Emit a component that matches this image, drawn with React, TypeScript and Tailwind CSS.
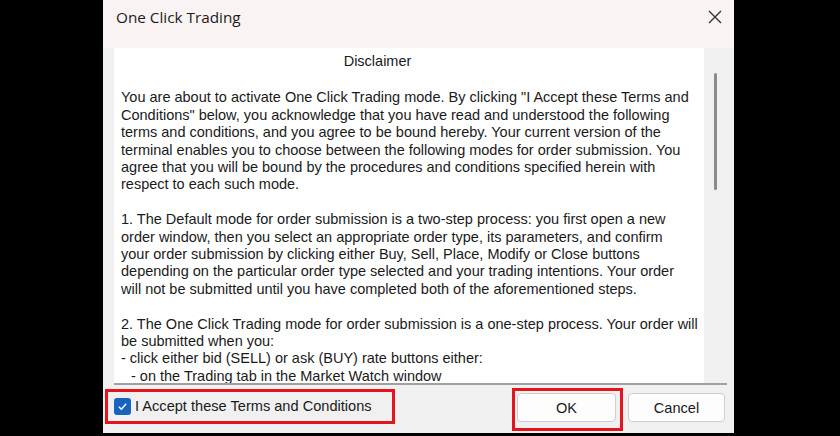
import React from "react";

const lines1 = [
  "You are about to activate One Click Trading mode. By clicking \"I Accept these Terms and",
  "Conditions\" below, you acknowledge that you have read and understood the following",
  "terms and conditions, and you agree to be bound hereby. Your current version of the",
  "terminal enables you to choose between the following modes for order submission. You",
  "agree that you will be bound by the procedures and conditions specified herein with",
  "respect to each such mode.",
];
const lines2 = [
  "1. The Default mode for order submission is a two-step process: you first open a new",
  "order window, then you select an appropriate order type, its parameters, and confirm",
  "your order submission by clicking either Buy, Sell, Place, Modify or Close buttons",
  "depending on the particular order type selected and your trading intentions. Your order",
  "will not be submitted until you have completed both of the aforementioned steps.",
];
const lines3 = [
  "2. The One Click Trading mode for order submission is a one-step process. Your order will",
  "be submitted when you:",
  "- click either bid (SELL) or ask (BUY) rate buttons either:",
];

function Para({ lines }: { lines: string[] }) {
  return (
    <div>
      {lines.map((l, i) => (
        <div key={i} className="whitespace-nowrap">
          {l}
        </div>
      ))}
    </div>
  );
}

export default function App() {
  return (
    <div className="flex h-[436px] w-[840px] bg-black pl-[103px]">
      <div className="flex h-[433px] w-[631px] flex-col bg-[#f0f0f0]">
        {/* Title bar */}
        <div className="flex h-[48px] items-start justify-between bg-[#f9f3f3] pl-[13px] pr-[10px] pt-[7px]">
          <span className="font-['Open_Sans',sans-serif] text-[15.3px] leading-[20px] text-[#1b1b1b]">
            One Click Trading
          </span>
          <svg width="16" height="16" viewBox="0 0 16 16" className="mr-[1px] mt-[2px]">
            <path d="M2 2 L14 14 M14 2 L2 14" stroke="#333" strokeWidth="1.4" fill="none" />
          </svg>
        </div>

        {/* Content box */}
        <div className="ml-[11px] mr-[7px] flex h-[337px] border-b-2 border-[#a0a0a0] bg-white">
          <div className="flex-1 overflow-hidden pl-[7px] pt-[5px] font-['Liberation_Sans',sans-serif] text-[14.5px] leading-[17.4px] text-[#1a1a1a]">
            <div className="pr-[70px] text-center">Disclaimer</div>
            <div className="h-[19px]" />
            <Para lines={lines1} />
            <div className="h-[17.4px]" />
            <Para lines={lines2} />
            <div className="h-[17.4px]" />
            <Para lines={lines3} />
            <div className="whitespace-nowrap pl-[10px]">- on the Trading tab in the Market Watch window</div>
          </div>
          <div className="flex w-[23px] justify-center bg-[#f0f0f0] pt-[25px]">
            <div className="h-[117px] w-[3px] rounded-full bg-[#8a8a8a]" />
          </div>
        </div>

        {/* Bottom row */}
        <div className="flex h-[48px] font-['Liberation_Sans',sans-serif] text-[14.6px] text-[#1a1a1a]">
          <div className="ml-[2px] mt-[4px] flex h-[35px] w-[290px] items-center border-[3px] border-[#e5141c] pl-[6px]">
            <div className="flex h-[17px] w-[17px] items-center justify-center rounded-[3px] bg-[#1664c0]">
              <svg width="11" height="11" viewBox="0 0 12 12">
                <path d="M2 6.3 L4.8 9 L10 3" stroke="white" strokeWidth="1.5" fill="none" />
              </svg>
            </div>
            <span className="ml-[4px]">I Accept these Terms and Conditions</span>
          </div>
          <div className="ml-auto mt-[3px] h-[43px] w-[111px] border-[3px] border-[#e5141c] pl-[2px] pt-[2px]">
            <div className="flex h-[29px] w-[99px] items-center justify-center rounded-[4px] border border-[#cfcfcf] bg-[#fdfdfd] pt-[2px]">
              OK
            </div>
          </div>
          <div className="ml-[5px] mr-[9px] mt-[8px] flex h-[29px] w-[97px] items-center justify-center rounded-[4px] border border-[#cfcfcf] bg-[#fdfdfd] pt-[2px]">
            Cancel
          </div>
        </div>
      </div>
    </div>
  );
}
